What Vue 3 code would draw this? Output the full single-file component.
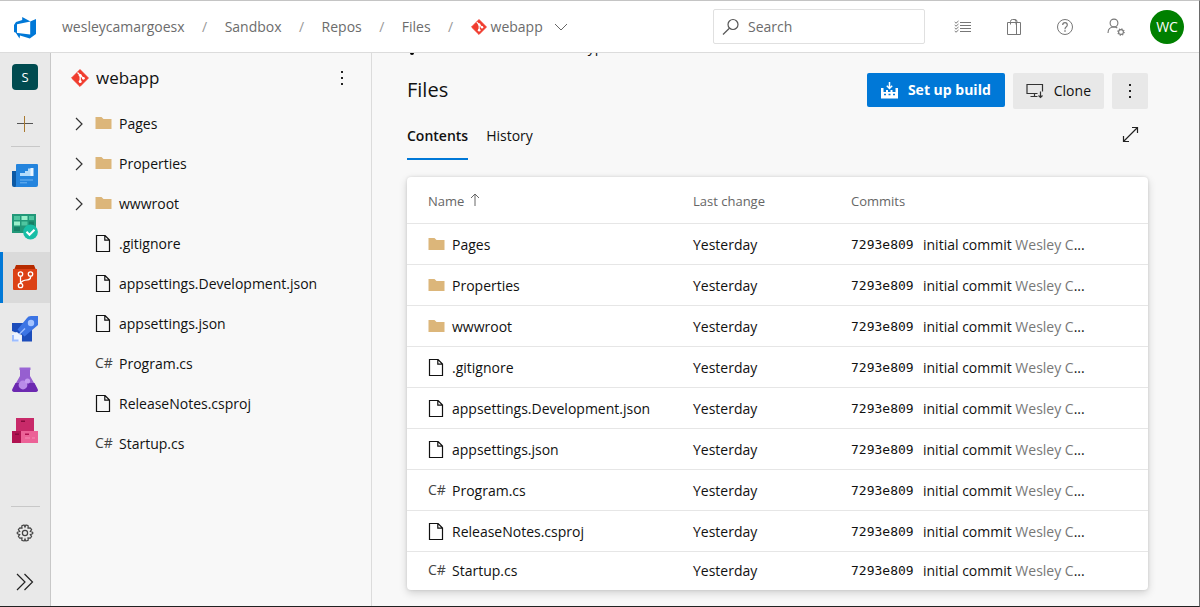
<script setup>
import { ref } from 'vue'

const search = ref('')
const crumbs = ['wesleycamargoesx', 'Sandbox', 'Repos', 'Files']
const files = [
  { name: 'Pages', kind: 'folder' },
  { name: 'Properties', kind: 'folder' },
  { name: 'wwwroot', kind: 'folder' },
  { name: '.gitignore', kind: 'file' },
  { name: 'appsettings.Development.json', kind: 'file' },
  { name: 'appsettings.json', kind: 'file' },
  { name: 'Program.cs', kind: 'cs' },
  { name: 'ReleaseNotes.csproj', kind: 'file' },
  { name: 'Startup.cs', kind: 'cs' },
]
</script>

<template>
  <div class="app">
    <svg class="sprite" aria-hidden="true">
      <symbol id="folder" viewBox="0 0 17 17">
        <path d="M0.5 2h6l2 2h8v10h-16z" fill="#dcb67a" />
      </symbol>
      <symbol id="file" viewBox="0 0 17 17">
        <path d="M1.500 .5h8.500l4.500 4.500v11.500h-13zM9.800 .8v4.400h4.400" fill="none" stroke="currentColor" stroke-width="1.200" />
      </symbol>
      <symbol id="git" viewBox="0 0 18 18">
        <path d="M9 .6 17.400 9 9 17.400 .6 9z" fill="#f03c2e" stroke="#f03c2e" stroke-linejoin="round" />
        <path d="M6.500 3.500l2.700 2.700v6.500M9.500 6.500l2.800 2.800" stroke="#fff" stroke-width="1.300" fill="none" />
        <circle cx="9.200" cy="6.300" r="1.400" fill="#fff" /><circle cx="9.200" cy="12.600" r="1.500" fill="#fff" /><circle cx="12.400" cy="9.300" r="1.400" fill="#fff" />
      </symbol>
    </svg>

    <header class="top">
      <a class="logo" href="#" aria-label="Home">
        <svg width="24" height="24" viewBox="0 0 24 24">
          <path d="M23 4v15l-6.200 4.500L7 20.500l-.5 3-3.700-5.700 14.400 1.700V6.500z" fill="#0078d7" />
          <path d="M17.500 6.500 9.200 2v3L3 7 1 10v7l3 1.300V9.200z" fill="#0078d7" />
        </svg>
      </a>
      <nav class="crumbs" aria-label="Breadcrumb">
        <template v-for="c in crumbs" :key="c">
          <a href="#">{{ c }}</a><span class="slash">/</span>
        </template>
        <button class="repo">
          <svg width="16" height="16"><use href="#git" /></svg>webapp
          <svg class="down" width="14" height="8" viewBox="0 0 14 8"><path d="M1 1l6 6 6-6" fill="none" stroke="#666" /></svg>
        </button>
      </nav>
      <label class="search">
        <svg width="18" height="18" viewBox="0 0 18 18"><g fill="none" stroke="#555" stroke-width="1.200"><circle cx="11" cy="6.500" r="5" /><path d="M7.400 10.200 1 16.500" /></g></svg>
        <input v-model="search" type="text" placeholder="Search" aria-label="Search" />
      </label>
      <div class="tools">
        <button aria-label="Work items">
          <svg width="18" height="18" viewBox="0 0 18 18"><path d="M6 4.500h11M6 7.500h11M6 10.500h11M6 13.500h11M.7 4l1.300 1.200L4.500 3M.7 7l1.300 1.200L4.500 6M.7 10l1.300 1.200L4.500 9M.7 13l1.300 1.200L4.500 12" fill="none" stroke="#777" /></svg>
        </button>
        <button aria-label="Marketplace">
          <svg width="18" height="18" viewBox="0 0 18 18"><path d="M2.500 4.500h13v12h-13zM11.500 4.500v12M5.500 6.500V3.500q0-2 2-2h1.500q2 0 2 2v3M8 1.500h2q2 0 2 2v1" fill="none" stroke="#777" /></svg>
        </button>
        <button aria-label="Help">
          <svg width="18" height="18" viewBox="0 0 18 18"><g fill="none" stroke="#777"><circle cx="9" cy="9" r="7.500" /><path d="M6.700 7q0-2.300 2.300-2.300T11.300 7q0 1-1.200 1.900T9 11.200" stroke-width="1.200" /></g><path d="M8.300 12.300h1.400v1.400H8.300z" fill="#777" /></svg>
        </button>
        <button aria-label="User settings">
          <svg width="18" height="18" viewBox="0 0 18 18"><g fill="none" stroke="#777" stroke-width="1.100"><circle cx="7" cy="5" r="3.900" /><path d="M1 15q0-6 6-6 2 0 3.300 1" /><circle cx="14" cy="14" r="2.400" /><circle cx="14" cy="14" r="3.200" stroke-dasharray="1.200 1.310" /></g></svg>
        </button>
      </div>
      <button class="avatar" aria-label="Account">WC</button>
    </header>

    <div class="body">
      <nav class="rail" aria-label="Project">
        <a class="tile project" href="#" aria-label="Sandbox"><span class="proj">S</span></a>
        <a class="tile add" href="#" aria-label="Add">
          <svg width="18" height="18" viewBox="0 0 18 18"><path d="M1 8.500h16" stroke="#555" /><path d="M8.500 1v16" stroke="#a9792f" /></svg>
        </a>
        <span class="rule"></span>
        <a class="tile first" href="#" aria-label="Overview">
          <svg width="26" height="26" viewBox="0 0 26 26"><path d="M0 8h5v16H2q-2 0-2-2z" fill="#0c59a4" /><path d="M4 2q0-1 1-1h20q1 0 1 1v20q0 2-2 2H3q1 0 1-2z" fill="#2484dd" /><path d="M8 10h5V8h3V5.500h3V13H8z" fill="#b5dcfb" /><path d="M18.500 5h3v8h-3z" fill="#eaf5ff" /><path d="M8 17h13M8 19.800h7" stroke="#70b5f2" /></svg>
        </a>
        <a class="tile" href="#" aria-label="Boards">
          <svg width="26" height="26" viewBox="0 0 26 26"><path d="M0 0h24v19H0z" fill="#229879" /><path d="M2 2h6v4H2zM17 2h5v4h-5zM9.500 7.500h6v4h-6z" fill="#4fc5a0" /><path d="M9.500 2h6v4h-6zM2 7.500h6v4H2z" fill="#9af0cb" /><path d="M2 13h6v4H2zM17 7.500h5v4h-5z" fill="#168066" /><circle cx="18.500" cy="18" r="7.400" fill="#18bea6" /><path d="M14.500 17.800l3 3 5-5" fill="none" stroke="#fff" stroke-width="2" /></svg>
        </a>
        <a class="tile active" href="#" aria-label="Repos">
          <svg width="26" height="26" viewBox="0 0 26 26"><path d="M4 0h18l2 5H2z" fill="#b62b00" /><path d="M1 4h24v20q0 1-1 1H2q-1 0-1-1z" fill="#dc4115" /><g fill="none" stroke="#fff" stroke-width="1.300"><circle cx="8.500" cy="9" r="2.200" /><circle cx="18.500" cy="9" r="2.200" /><circle cx="8.500" cy="20.500" r="2.200" /><path d="M8.500 11.200v7M18.500 11.200v1.300q0 2-3 2.300-6 .5-7 3.500" /></g></svg>
        </a>
        <a class="tile" href="#" aria-label="Pipelines">
          <svg width="26" height="26" viewBox="0 0 26 26"><path d="M0 7h12l8 7v11.500H10V19L0 15z" fill="#1c4dbb" /><path d="M26 0v9L12.500 20.500 5.500 13.500 15 2q1-2 4-2z" fill="#3c74e4" /><circle cx="19" cy="7" r="3.200" fill="#a4c3ff" /><path d="M13 12.500 7 18.500" stroke="#9dbdff" stroke-width="1.500" /><path d="M0 18l5-2 5 5-2 4.500H0z" fill="#eef4ff" /><path d="M1 19v5.500h5.500" stroke="#9dbdff" stroke-width="2" fill="none" /></svg>
        </a>
        <a class="tile" href="#" aria-label="Test Plans">
          <svg width="26" height="26" viewBox="0 0 26 26"><path d="M8 2h10v7l7.500 13q1 3-2 3h-21q-3 0-2-3L8 9z" fill="#965fd0" /><path d="M3.500 16h19l3 6q1 3-2 3h-21q-3 0-2-3z" fill="#6c29b0" /><path d="M7.500 .5h11v2.500h-11z" fill="#9a66d5" /><circle cx="11" cy="18" r="4.400" fill="#b98ae8" /><circle cx="15.500" cy="14" r="2.600" fill="#c49af0" /></svg>
        </a>
        <a class="tile" href="#" aria-label="Artifacts">
          <svg width="26" height="26" viewBox="0 0 26 26"><path d="M4 0h18v13H4z" fill="#c82a69" /><path d="M0 13h9v12H0z" fill="#b11351" /><path d="M9 13h17v12H9z" fill="#ec6297" /><path d="M9 2.500h4v1.500H9zM3 15.500h4v1.500H3z" fill="#870a3d" /><path d="M13 15.500h4v1.500h-4z" fill="#b11351" /><path d="M13 20h5M20 20h3" stroke="#f48ab3" /></svg>
        </a>
        <span class="spacer"></span>
        <span class="rule"></span>
        <a class="tile" href="#" aria-label="Project settings">
          <svg width="18" height="18" viewBox="0 0 18 18"><g fill="none" stroke="#444" stroke-width="1.200"><circle cx="9" cy="9" r="2.600" /><path d="M7.400 1.200h.8L9 3l.8-1.800h.8q1.400.3 1.600.6l-.2 2.200 2.200-.2q1 1 1.400 1.800L14.300 7.400l2.400.9v1.400l-2.400.9 1.300 1.800q-.4 1-1.400 1.800l-2.200-.2.2 2.200q-1 .6-2.400.7L9 15l-.8 1.900q-1.400-.1-2.400-.7L6 14l-2.200.2q-1-.8-1.400-1.800l1.300-1.800-2.400-.9V8.300l2.400-.9-1.300-1.800q.4-.8 1.400-1.800L6 4l-.2-2.200z" /></g></svg>
        </a>
        <a class="tile expand" href="#" aria-label="Expand">
          <svg width="18" height="18" viewBox="0 0 18 18"><path d="M1 1l8 8-8 8M8.500 1l8 8-8 8" fill="none" stroke="#222" stroke-width="1.200" /></svg>
        </a>
      </nav>

      <aside class="side">
        <div class="side-head">
          <svg width="18" height="18"><use href="#git" /></svg>
          <span class="side-title">webapp</span>
          <button class="more" aria-label="More"><i></i><i></i><i></i></button>
        </div>
        <ul class="tree">
          <li v-for="f in files" :key="f.name">
            <svg class="chev" width="8" height="14" viewBox="0 0 8 14"><path v-if="f.kind === 'folder'" d="M1 1l6 6-6 6" fill="none" stroke="#333" stroke-width="1.200" /></svg>
            <span v-if="f.kind === 'cs'" class="cs">C#</span>
            <svg v-else class="ico" width="17" height="17"><use :href="'#' + f.kind" /></svg>
            <a href="#">{{ f.name }}</a>
          </li>
        </ul>
      </aside>

      <main class="main">
        <div class="path">
          <svg width="12" height="16" viewBox="0 0 12 16"><circle cx="5" cy="14" r="2" /></svg>
          <span class="path-sep">/</span><span>Type</span>
        </div>
        <div class="title-row">
          <h1>Files</h1>
          <button class="btn primary">
            <svg width="17" height="17" viewBox="0 0 17 17"><path d="M0 6h2.500v4H5V8h2v2h2.500V8h2v2h3V6H17v10.500H0z" fill="#fff" /><path d="M8.500 0v6M5.800 3.800 8.500 6.500l2.700-2.700" fill="none" stroke="#fff" stroke-width="1.500" /><path d="M3 12.500h2M7.500 12.500h2M12 12.500h2" stroke="#0078d7" stroke-width="1.500" /></svg>
            Set up build
          </button>
          <button class="btn">
            <svg width="18" height="16" viewBox="0 0 18 16"><path d="M11.500 10.500H1V1.500h15.500v7M4.500 13.500h7M8.500 10.500v3" fill="none" stroke="#333" stroke-width="1.200" /><path d="M14.500 8.500v6M12.500 12.500l2 2 2-2" fill="none" stroke="#333" stroke-width="1.200" /></svg>
            Clone
          </button>
          <button class="btn dots" aria-label="More actions"><i></i><i></i><i></i></button>
        </div>
        <div class="tabs">
          <a class="tab on" href="#">Contents</a>
          <a class="tab" href="#">History</a>
          <button class="full" aria-label="Full screen">
            <svg width="17" height="17" viewBox="0 0 17 17"><path d="M1.500 15.500l14-14M10 1.500h5.500V7M1.500 10v5.500H7" fill="none" stroke="#222" stroke-width="1.200" /></svg>
          </button>
        </div>
        <div class="card">
          <table>
            <thead>
              <tr>
                <th class="c1"><span class="sort">Name <svg width="10" height="14" viewBox="0 0 10 14"><path d="M5 1v12M1 5l4-4 4 4" fill="none" stroke="#666" /></svg></span></th>
                <th class="c2">Last change</th>
                <th>Commits</th>
              </tr>
            </thead>
            <tbody>
              <tr v-for="f in files" :key="f.name">
                <td>
                  <div class="name">
                    <span v-if="f.kind === 'cs'" class="cs">C#</span>
                    <svg v-else class="ico" width="17" height="17"><use :href="'#' + f.kind" /></svg>
                    <a href="#">{{ f.name }}</a>
                  </div>
                </td>
                <td>Yesterday</td>
                <td>
                  <div class="commit"><code>7293e809</code><span>initial commit <em>Wesley C</em>...</span></div>
                </td>
              </tr>
            </tbody>
          </table>
        </div>
      </main>
    </div>
  </div>
</template>

<style>
body { margin: 0; }
</style>

<style scoped>
* { box-sizing: border-box; }
.app {
  display: flex; flex-direction: column; height: 100vh;
  border-top: 1px solid #c4c4c4; border-right: 1px solid #6a6a6a; border-bottom: 1px solid #222;
  background: #f8f8f8; color: #111; font: 14px/20px "Open Sans", "Noto Sans", sans-serif;
}
.sprite { position: absolute; width: 0; height: 0; }
a { color: inherit; text-decoration: none; }
button { border: 0; padding: 0; background: none; color: inherit; font: inherit; cursor: pointer; }
svg { flex: none; display: block; }

.top { display: flex; align-items: center; flex: none; height: 52px; background: #fff; border-bottom: 1px solid #dcdcdc; padding-right: 15px; color: #6c6c6c; }
.logo { flex: none; margin-left: 13px; width: 49px; }
.crumbs { display: flex; align-items: center; flex: 1; }
.slash { width: 40px; text-align: center; color: #999; }
.repo { display: flex; align-items: center; gap: 4px; }
.down { margin-left: 7px; }
.search { display: flex; align-items: center; gap: 8px; width: 212px; height: 35px; border: 1px solid #e0e0e0; border-radius: 2px; padding: 0 8px; }
.search input { flex: 1; min-width: 0; border: 0; padding: 0; outline: 0; background: none; font: inherit; color: #333; }
.search input::placeholder { color: #6c6c6c; opacity: 1; }
.tools { display: flex; gap: 33px; margin: 0 25px 0 29px; }
.avatar { width: 34px; height: 34px; border-radius: 50%; background: #008000; color: #fff; }

.body { display: flex; flex: 1; min-height: 0; }
.rail { display: flex; flex-direction: column; align-items: center; flex: none; width: 51px; background: #e9e9e9; border-right: 1px solid #c8c8c8; }
.tile { display: flex; align-items: center; justify-content: center; width: 100%; height: 51px; flex: none; }
.project { height: 48px; }
.add { height: 45px; }
.first { margin-top: 3px; }
.expand { height: 48px; }
.active { background: #dadada; box-shadow: inset 3px 0 #0078d7; }
.rule { width: 29px; height: 1px; flex: none; background: #c8c8c8; }
.spacer { flex: 1; }
.proj { width: 26px; height: 26px; border-radius: 4px; background: #004b50; color: #fff; font-size: 13px; line-height: 26px; text-align: center; }

.side { flex: none; width: 321px; border-right: 1px solid #dcdcdc; }
.side-head { display: flex; align-items: center; height: 50px; padding: 0 22px 0 20px; gap: 7px; }
.side-title { flex: 1; font-size: 17px; line-height: 24px; }
.more, .dots { display: flex; flex-direction: column; align-items: center; justify-content: center; gap: 4px; }
.more { width: 14px; height: 24px; }
.more i, .dots i { width: 2px; height: 2px; background: #222; }
.tree { list-style: none; margin: 1px 0 0; padding: 0 0 0 24px; }
.tree li { display: flex; align-items: center; height: 40px; }
.chev { margin-right: 12px; }
.ico, .cs { flex: none; width: 17px; margin-right: 7px; margin-bottom: 2px; }
.cs { color: #444; line-height: 18px; }

.main { flex: 1; min-width: 0; overflow: hidden; padding: 0 51px 0 35px; }
.path { display: flex; align-items: center; height: 20px; margin-top: -16px; }
.path-sep { margin: 0 15px 0 141px; }
.title-row { display: flex; align-items: flex-start; gap: 8px; height: 36px; margin-top: 16px; }
h1 { flex: 1; margin: 0; font-size: 20px; line-height: 34px; font-weight: 500; }
.btn { display: flex; align-items: center; gap: 10px; height: 36px; padding: 0 13px; border-radius: 2px; background: #e8e8e8; font-weight: 500; }
.primary { height: 34px; padding: 0 14px; background: #0078d7; color: #fff; font-weight: 700; }
.dots { width: 36px; padding: 0; gap: 4px; }
.tabs { display: flex; align-items: center; gap: 18px; margin-top: 3px; height: 48px; }
.tab { height: 48px; line-height: 47px; }
.on { font-weight: 600; border-bottom: 2px solid #0078d7; }
.full { margin: 0 9px 4px auto; }
.card { margin-top: 17px; background: #fff; border-radius: 4px; box-shadow: 0 3px 8px rgba(0, 0, 0, .16), 0 0 3px rgba(0, 0, 0, .12); }
table { width: 100%; table-layout: fixed; border-collapse: collapse; }
th, td { height: 41px; padding: 3px 0 0; text-align: left; border-bottom: 1px solid #e6e6e6; }
th { height: 46px; font-size: 13px; font-weight: 400; color: #666; }
.sort { display: flex; align-items: center; gap: 6px; }
.sort svg { margin-bottom: 3px; }
tr > :first-child { padding-left: 21px; }
tbody tr:last-child td { border-bottom: 0; height: 39px; padding-top: 1px; }
.c1 { width: 286px; }
.c2 { width: 158px; }
.name { display: flex; align-items: center; }
.commit { display: flex; align-items: center; gap: 7px; white-space: nowrap; }
code { min-width: 65px; font: 13px/20px "DejaVu Sans Mono", monospace; }
em { font-style: normal; color: #777; }
</style>
